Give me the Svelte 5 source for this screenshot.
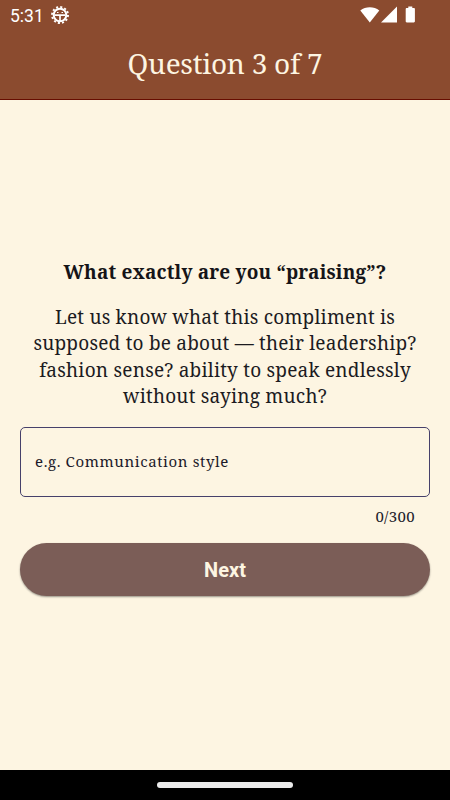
<script>
  const maxLength = 300;
  const lines = [
    "Let us know what this compliment is",
    "supposed to be about — their leadership?",
    "fashion sense? ability to speak endlessly",
    "without saying much?",
  ];

  let answer = $state("");
</script>

<div class="screen">
  <header class="app-bar">
    <div class="status">
      <span class="time">5:31</span>
      <svg class="debug" viewBox="0 0 20 20" width="20" height="20" aria-hidden="true">
        <circle cx="10" cy="10" r="8" fill="none" stroke="#fff" stroke-width="1.9" stroke-dasharray="2.1 2.089" />
        <circle cx="10" cy="10" r="6.3" fill="none" stroke="#fff" stroke-width="2" />
        <path d="M4.4 10.2h11.2M10 10.2v6" fill="none" stroke="#fff" stroke-width="1.7" />
        <path d="M7 7.5h1.5M11.5 7.5h1.5" stroke="#fff" stroke-width="1.2" />
      </svg>
      <svg class="signals" viewBox="0 0 56 18" width="56" height="18" aria-hidden="true">
        <path d="M.3 4.4C5.6.1 14 .1 19.3 4.4L9.8 16.4z" fill="#fff" />
        <path d="M37 .5v15.9H21z" fill="#fff" />
        <path d="M48.3.4h4v1.5h1.5c.7 0 1.1.4 1.1 1.1v12.3c0 .7-.4 1.1-1.1 1.1h-7c-.7 0-1.1-.4-1.1-1.1V3c0-.7.4-1.1 1.1-1.1h1.5z" fill="#fff" />
      </svg>
    </div>
    <h1>Question 3 of 7</h1>
  </header>

  <main>
    <h2>What exactly are you “praising”?</h2>
    <p class="hint">
      {#each lines as line}
        <span>{line}</span>
      {/each}
    </p>
    <input type="text" placeholder="e.g. Communication style" maxlength={maxLength} bind:value={answer} />
    <div class="counter">{answer.length}/{maxLength}</div>
    <button type="button">Next</button>
  </main>

  <footer><span class="handle"></span></footer>
</div>

<style>
  :global(body) {
    background: #fdf5e2;
  }

  .screen {
    display: flex;
    flex-direction: column;
    width: 450px;
    height: 800px;
    overflow: hidden;
    background: #fdf5e2;
    color: #1c1b1f;
    font-family: "Noto Serif", "Droid Serif", "DejaVu Serif", serif;
  }

  .app-bar {
    box-sizing: border-box;
    height: 100px;
    background: #8b4b2f;
    border-bottom: 1px solid #670d00;
    color: #fdf5e2;
  }

  .status {
    display: flex;
    align-items: center;
    height: 30px;
    padding: 0 34px 0 10px;
    color: #fff;
  }

  .time {
    width: 40px;
    padding-top: 2px;
    font: 17.5px/30px Roboto, sans-serif;
  }

  .signals {
    margin-left: auto;
  }

  h1 {
    margin: 0;
    font-size: 28px;
    font-weight: 400;
    line-height: 66px;
    letter-spacing: -0.27px;
    text-align: center;
    white-space: nowrap;
  }

  main {
    display: flex;
    flex: 1;
    flex-direction: column;
    padding: 159px 20px 0;
  }

  h2 {
    margin: 0;
    color: #151418;
    font-size: 19px;
    line-height: 27px;
    letter-spacing: 0.17px;
    text-align: center;
    white-space: nowrap;
  }

  .hint {
    margin: 18px 0 17px;
    font-size: 19px;
    line-height: 26.4px;
    letter-spacing: 0.22px;
    text-align: center;
  }

  .hint span {
    display: block;
    white-space: nowrap;
  }

  input {
    box-sizing: border-box;
    width: 100%;
    height: 70px;
    padding: 0 14px 2px;
    border: 1px solid #46406a;
    border-radius: 5px;
    outline: none;
    background: transparent;
    color: #1c1b1f;
    font: inherit;
    font-size: 15px;
    letter-spacing: 0.62px;
  }

  input::placeholder {
    color: #1c1a2a;
    opacity: 1;
  }

  .counter {
    padding: 8px 15px 0 0;
    color: #1c1a2a;
    font-size: 15px;
    line-height: 22px;
    letter-spacing: 0.35px;
    text-align: right;
  }

  button {
    height: 53px;
    margin-top: 16px;
    padding-top: 2px;
    border: 0;
    border-radius: 27px;
    background: #7b5d57;
    box-shadow: 0 1px 2px rgba(0, 0, 0, 0.4);
    color: #fdf5e2;
    font: 700 20px Roboto, sans-serif;
  }

  footer {
    display: flex;
    align-items: center;
    justify-content: center;
    height: 30px;
    background: #000;
  }

  .handle {
    width: 136px;
    height: 6px;
    border-radius: 3px;
    background: #ebebeb;
  }
</style>
